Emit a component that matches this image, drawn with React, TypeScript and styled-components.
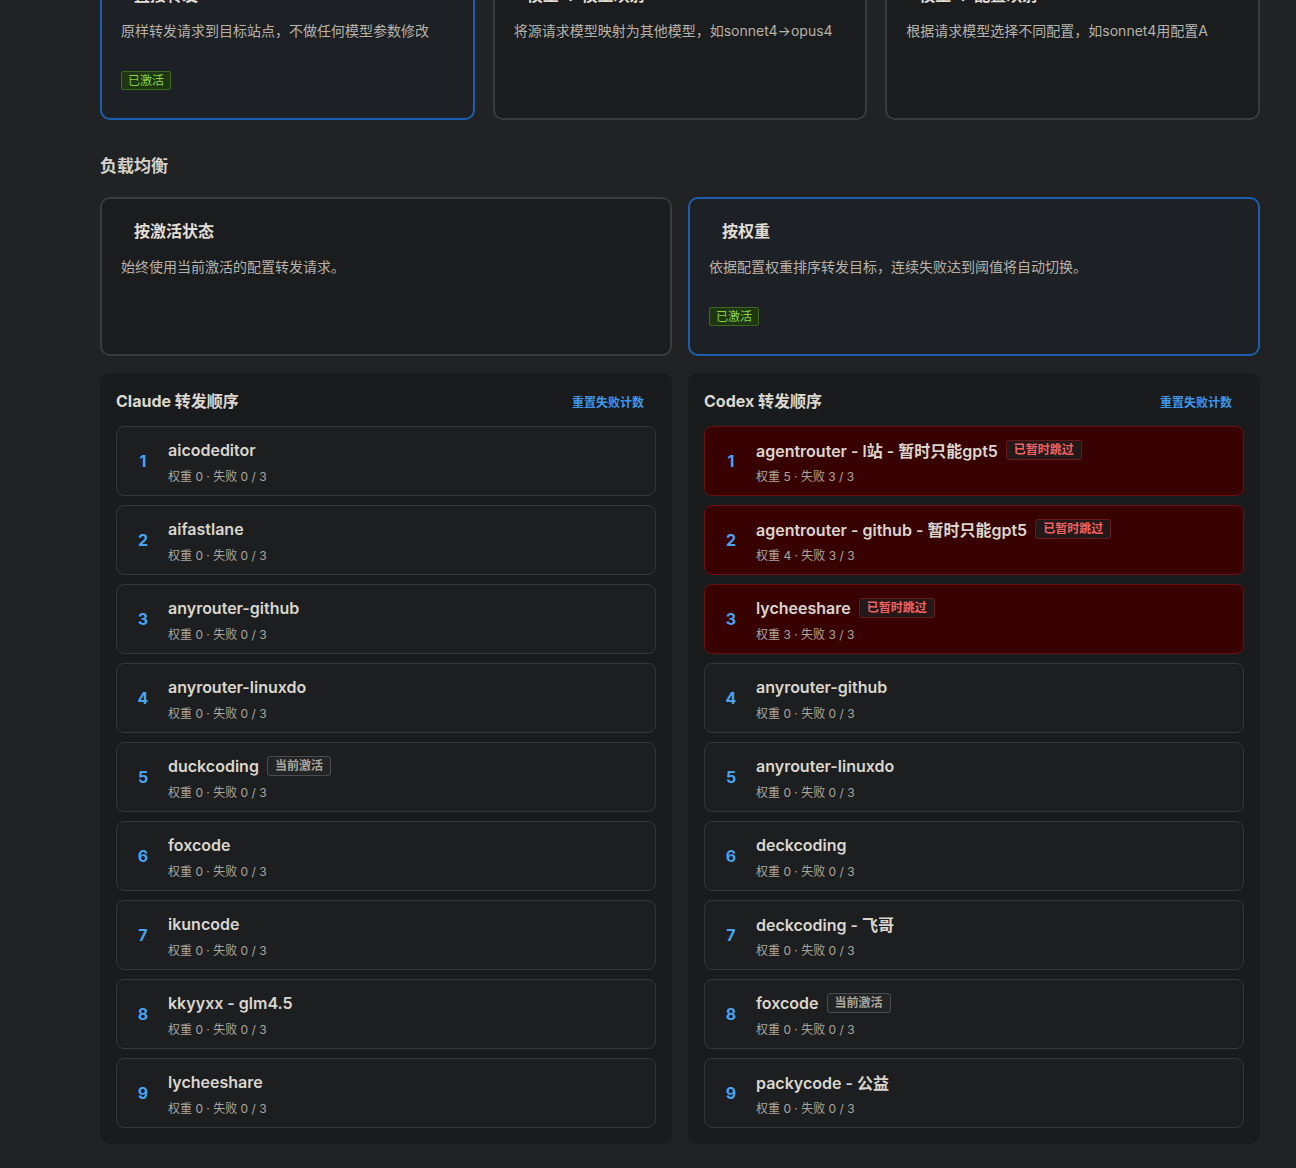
import React from "react";
import styled, { createGlobalStyle } from "styled-components";

const GlobalStyle = createGlobalStyle`
  html, body {
    margin: 0;
    padding: 0;
    background: #202224;
  }
  body {
    font-family: Inter, "Noto Sans CJK SC", "Noto Sans", sans-serif;
    color: #d8d4cc;
    -webkit-font-smoothing: antialiased;
  }
  * { box-sizing: border-box; }
`;

const Page = styled.div`
  width: 1160px;
  margin: -39px 0 0 100px;
  padding-bottom: 26px;
  display: flex;
  flex-direction: column;
`;

const ModeGrid = styled.div<{ $cols: number; $gap: number }>`
  display: grid;
  grid-template-columns: repeat(${(p) => p.$cols}, 1fr);
  gap: ${(p) => p.$gap}px;
`;

const ModeCard = styled.div<{ $active?: boolean }>`
  border: 2px solid ${(p) => (p.$active ? "#1d5fae" : "#393c3f")};
  background: ${(p) => (p.$active ? "#1d2024" : "#1a1c1e")};
  border-radius: 10px;
  padding: 20px 19px 28px;
  height: 159px;
  display: flex;
  flex-direction: column;
`;

const ModeTitle = styled.div`
  font-size: 16px;
  line-height: 24px;
  font-weight: 700;
  color: #e2ded6;
  padding-left: 13px;
`;

const ModeDesc = styled.div`
  font-size: 14px;
  line-height: 20px;
  color: #b6b2aa;
  margin-top: 14px;
`;

const ActiveBadge = styled.span`
  align-self: flex-start;
  margin-top: auto;
  font-size: 12px;
  line-height: 17px;
  padding: 0 6px;
  border: 1px solid #3c6a20;
  background: #1e3611;
  color: #86d24a;
  border-radius: 2px;
`;

const SectionTitle = styled.h2`
  margin: 34px 0 19px;
  font-size: 17px;
  line-height: 24px;
  font-weight: 700;
  color: #d6d2ca;
`;

const PanelGrid = styled.div`
  display: grid;
  grid-template-columns: 1fr 1fr;
  gap: 16px;
  margin-top: 17px;
`;

const Panel = styled.section`
  background: #191b1d;
  border-radius: 10px;
  padding: 16px;
  display: flex;
  flex-direction: column;
`;

const PanelHeader = styled.div`
  display: flex;
  align-items: center;
  justify-content: space-between;
  margin-bottom: 13px;
  padding-right: 12px;
`;

const PanelTitle = styled.div`
  font-size: 16px;
  line-height: 24px;
  font-weight: 700;
  color: #dcd8d0;
`;

const LinkButton = styled.button`
  background: none;
  border: none;
  padding: 0;
  font-family: inherit;
  font-size: 12px;
  font-weight: 700;
  color: #3f97e8;
  cursor: pointer;
`;

const RowList = styled.div`
  display: flex;
  flex-direction: column;
  gap: 9px;
`;

const Row = styled.div<{ $skipped?: boolean }>`
  display: flex;
  align-items: center;
  gap: 15px;
  height: 70px;
  padding: 0 16px;
  border-radius: 8px;
  border: 1px solid ${(p) => (p.$skipped ? "#6e1010" : "#34373a")};
  background: ${(p) => (p.$skipped ? "#390202" : "#1c1e20")};
`;

const Index = styled.div`
  width: 20px;
  text-align: center;
  font-size: 16px;
  font-weight: 700;
  color: #4aa3ee;
`;

const RowBody = styled.div`
  display: flex;
  flex-direction: column;
  gap: 7px;
  padding-top: 2px;
`;

const NameLine = styled.div`
  display: flex;
  align-items: center;
  gap: 8px;
  height: 22px;
`;

const Name = styled.span`
  font-size: 16px;
  font-weight: 600;
  color: #dad6ce;
`;

const Tag = styled.span<{ $kind: "current" | "skip" }>`
  font-size: 12px;
  font-weight: 700;
  line-height: 18px;
  padding: 0 7px;
  border-radius: 3px;
  border: 1px solid ${(p) => (p.$kind === "skip" ? "#6a1a1a" : "#4a4d50")};
  background: ${(p) => (p.$kind === "skip" ? "#241819" : "#222426")};
  color: ${(p) => (p.$kind === "skip" ? "#f06262" : "#aaa69e")};
`;

const Meta = styled.div`
  font-size: 12px;
  line-height: 18px;
  color: #aaa69e;
`;

type Item = {
  name: string;
  weight: number;
  fail: number;
  tag?: "current" | "skip";
};

const claude: Item[] = [
  { name: "aicodeditor", weight: 0, fail: 0 },
  { name: "aifastlane", weight: 0, fail: 0 },
  { name: "anyrouter-github", weight: 0, fail: 0 },
  { name: "anyrouter-linuxdo", weight: 0, fail: 0 },
  { name: "duckcoding", weight: 0, fail: 0, tag: "current" },
  { name: "foxcode", weight: 0, fail: 0 },
  { name: "ikuncode", weight: 0, fail: 0 },
  { name: "kkyyxx - glm4.5", weight: 0, fail: 0 },
  { name: "lycheeshare", weight: 0, fail: 0 },
];

const codex: Item[] = [
  { name: "agentrouter - l站 - 暂时只能gpt5", weight: 5, fail: 3, tag: "skip" },
  { name: "agentrouter - github - 暂时只能gpt5", weight: 4, fail: 3, tag: "skip" },
  { name: "lycheeshare", weight: 3, fail: 3, tag: "skip" },
  { name: "anyrouter-github", weight: 0, fail: 0 },
  { name: "anyrouter-linuxdo", weight: 0, fail: 0 },
  { name: "deckcoding", weight: 0, fail: 0 },
  { name: "deckcoding - 飞哥", weight: 0, fail: 0 },
  { name: "foxcode", weight: 0, fail: 0, tag: "current" },
  { name: "packycode - 公益", weight: 0, fail: 0 },
];

const OrderPanel: React.FC<{ title: string; items: Item[] }> = ({ title, items }) => (
  <Panel>
    <PanelHeader>
      <PanelTitle>{title}</PanelTitle>
      <LinkButton>重置失败计数</LinkButton>
    </PanelHeader>
    <RowList>
      {items.map((it, i) => (
        <Row key={i} $skipped={it.tag === "skip"}>
          <Index>{i + 1}</Index>
          <RowBody>
            <NameLine>
              <Name>{it.name}</Name>
              {it.tag === "current" && <Tag $kind="current">当前激活</Tag>}
              {it.tag === "skip" && <Tag $kind="skip">已暂时跳过</Tag>}
            </NameLine>
            <Meta>
              权重 {it.weight} · 失败 {it.fail} / 3
            </Meta>
          </RowBody>
        </Row>
      ))}
    </RowList>
  </Panel>
);

export default function App() {
  return (
    <>
      <GlobalStyle />
      <Page>
        <ModeGrid $cols={3} $gap={18}>
          <ModeCard $active>
            <ModeTitle>直接转发</ModeTitle>
            <ModeDesc>原样转发请求到目标站点，不做任何模型参数修改</ModeDesc>
            <ActiveBadge>已激活</ActiveBadge>
          </ModeCard>
          <ModeCard>
            <ModeTitle>模型 → 模型映射</ModeTitle>
            <ModeDesc>将源请求模型映射为其他模型，如sonnet4→opus4</ModeDesc>
          </ModeCard>
          <ModeCard>
            <ModeTitle>模型 → 配置映射</ModeTitle>
            <ModeDesc>根据请求模型选择不同配置，如sonnet4用配置A</ModeDesc>
          </ModeCard>
        </ModeGrid>

        <SectionTitle>负载均衡</SectionTitle>

        <ModeGrid $cols={2} $gap={16}>
          <ModeCard>
            <ModeTitle>按激活状态</ModeTitle>
            <ModeDesc>始终使用当前激活的配置转发请求。</ModeDesc>
          </ModeCard>
          <ModeCard $active>
            <ModeTitle>按权重</ModeTitle>
            <ModeDesc>依据配置权重排序转发目标，连续失败达到阈值将自动切换。</ModeDesc>
            <ActiveBadge>已激活</ActiveBadge>
          </ModeCard>
        </ModeGrid>

        <PanelGrid>
          <OrderPanel title="Claude 转发顺序" items={claude} />
          <OrderPanel title="Codex 转发顺序" items={codex} />
        </PanelGrid>
      </Page>
    </>
  );
}
